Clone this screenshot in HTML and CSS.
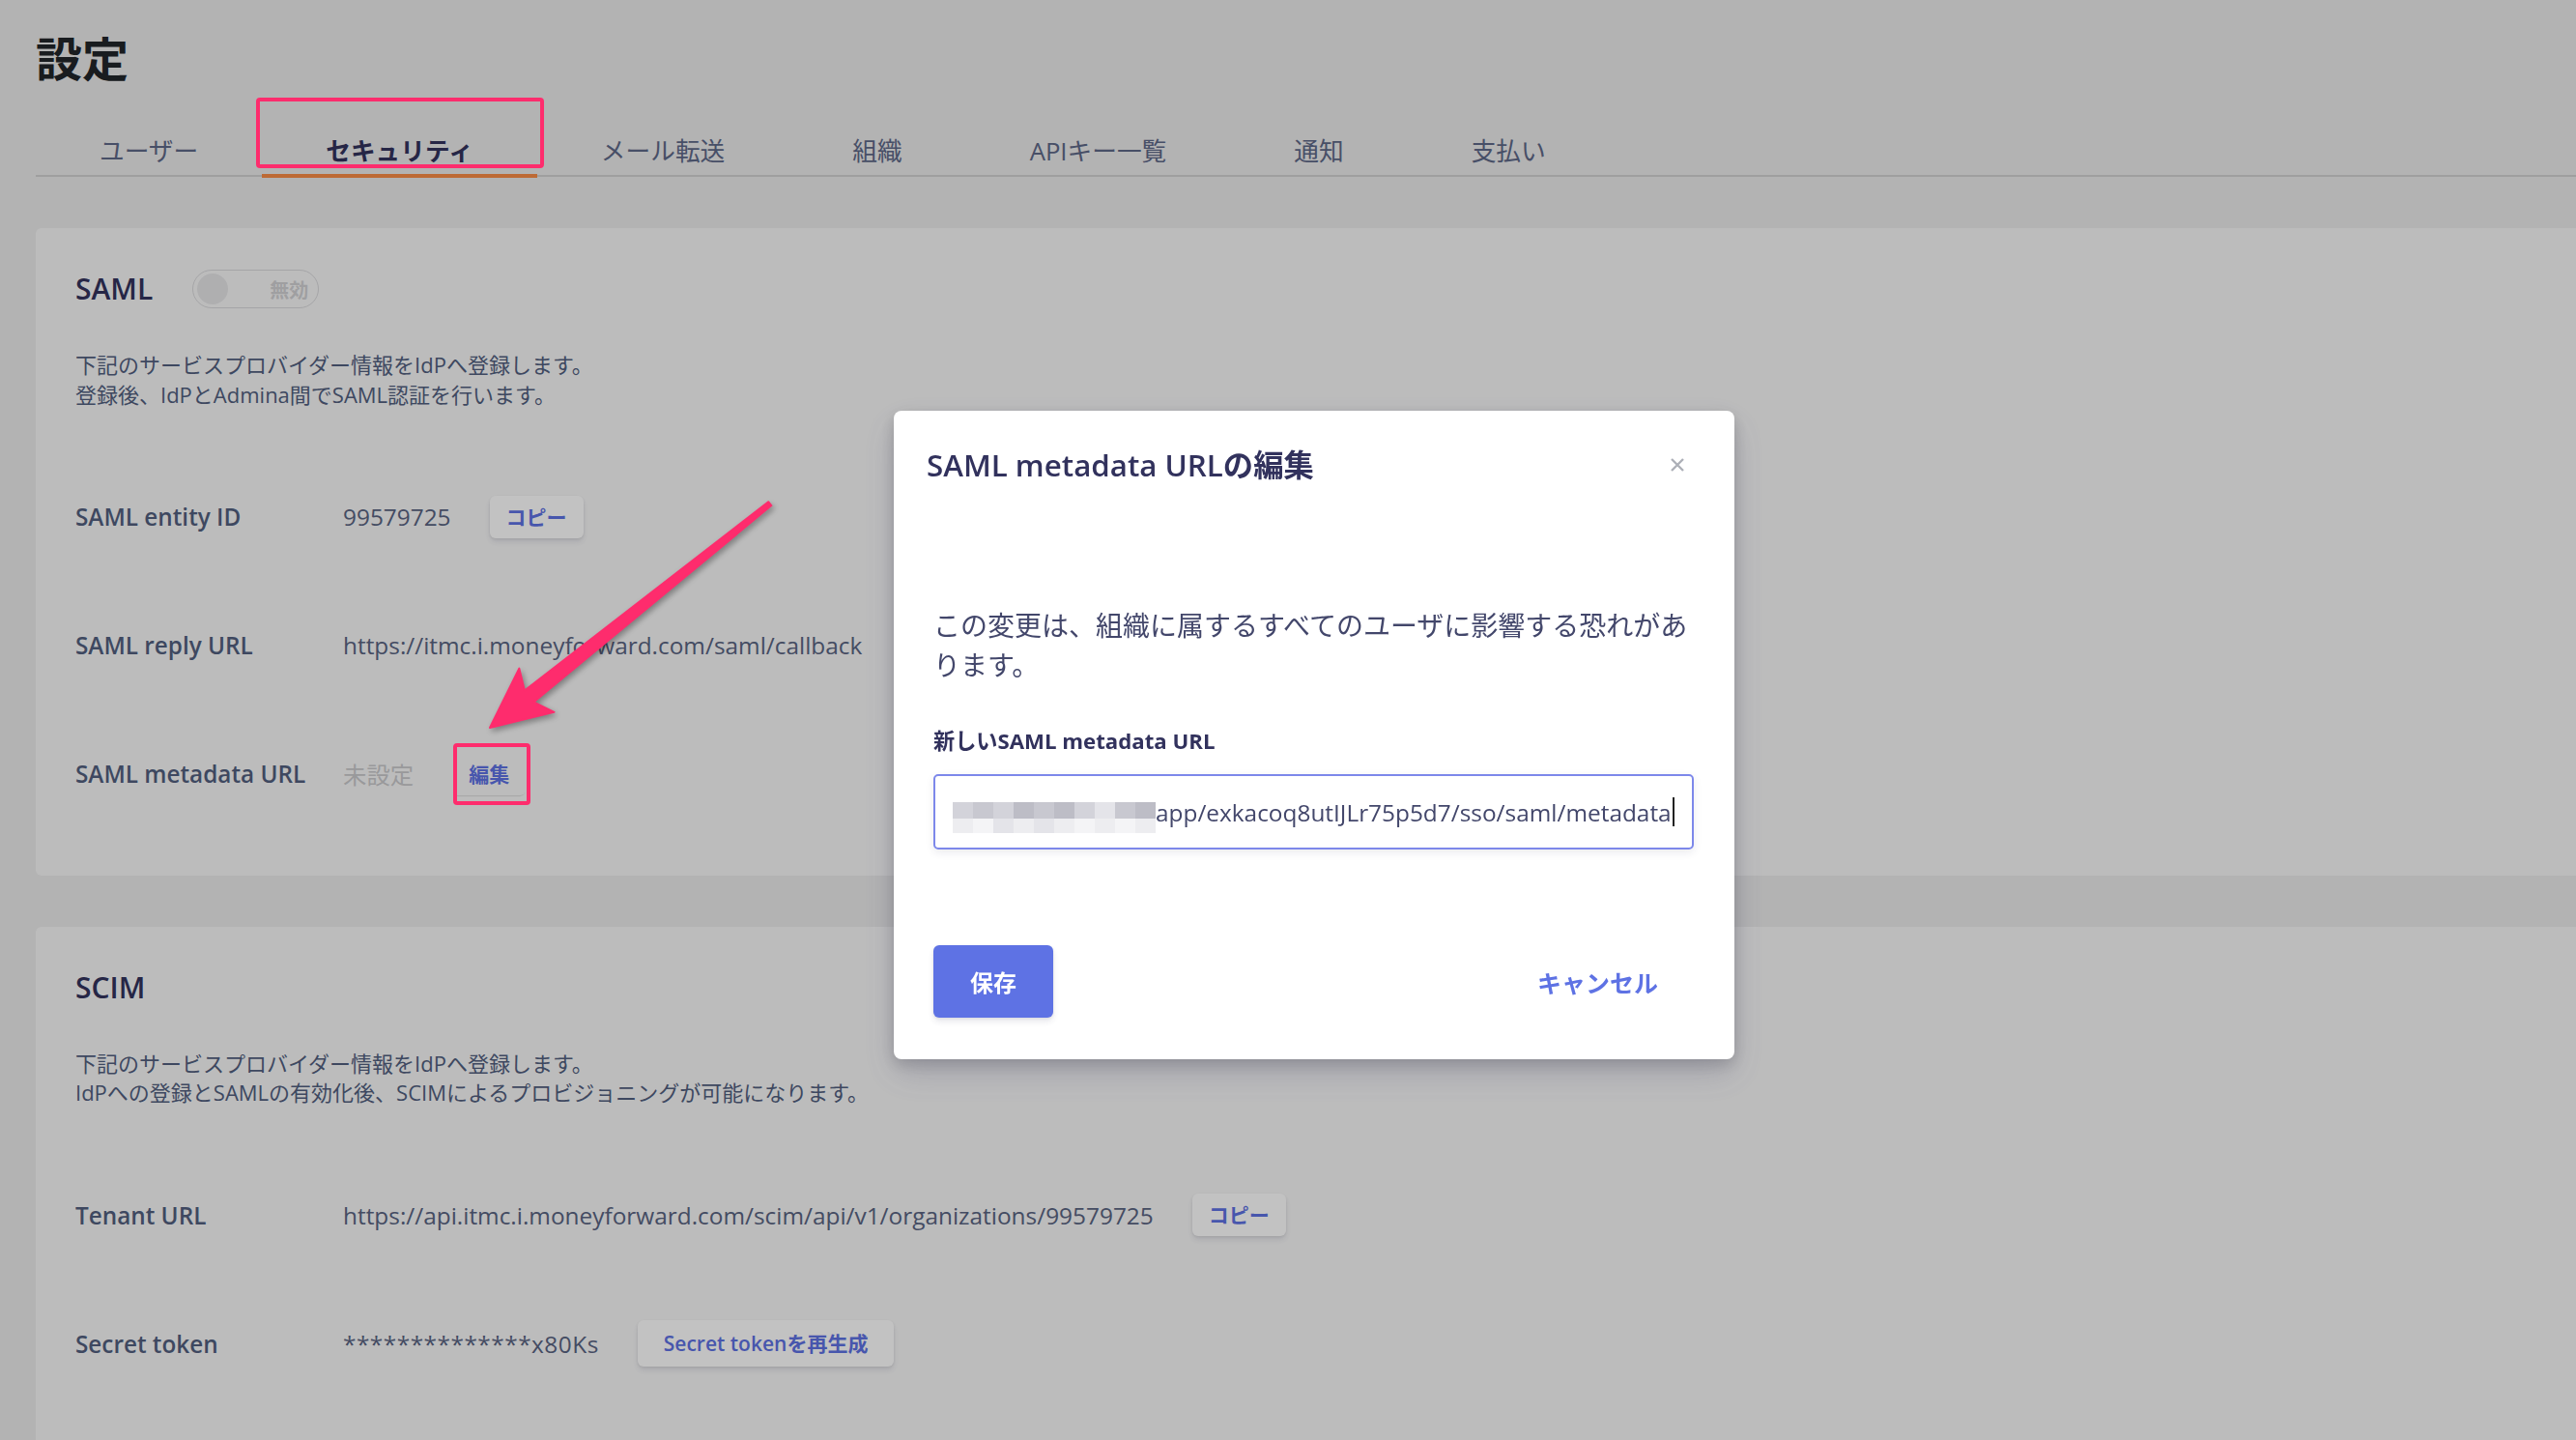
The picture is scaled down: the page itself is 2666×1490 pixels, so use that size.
FILE: index.html
```html
<!DOCTYPE html>
<html lang="ja">
<head>
    <meta charset="UTF-8">
    <meta name="viewport" content="width=device-width, initial-scale=1.0">
    <title>設定</title>
    <link rel="stylesheet" href="styles.css">
</head>
<body>
    <div class="page">
        <h1 class="title">設定</h1>
        <nav class="tabs">
            <a class="tab">ユーザー</a>
            <a class="tab active">セキュリティ</a>
            <a class="tab">メール転送</a>
            <a class="tab">組織</a>
            <a class="tab">APIキー一覧</a>
            <a class="tab">通知</a>
            <a class="tab">支払い</a>
        </nav>

        <section class="card">
            <div class="card-head">
                <h2>SAML</h2>
                <span class="toggle"><span class="knob"></span><span class="toggle-text">無効</span></span>
            </div>
            <p class="desc">下記のサービスプロバイダー情報をIdPへ登録します。<br>登録後、IdPとAdmina間でSAML認証を行います。</p>
            <div class="row">
                <span class="label">SAML entity ID</span>
                <span class="value">99579725</span>
                <button class="btn">コピー</button>
            </div>
            <div class="row">
                <span class="label">SAML reply URL</span>
                <span class="value">https://itmc.i.moneyforward.com/saml/callback</span>
            </div>
            <div class="row">
                <span class="label">SAML metadata URL</span>
                <span class="value unset">未設定</span>
                <button class="btn plain">編集</button>
            </div>
        </section>

        <section class="card">
            <div class="card-head">
                <h2>SCIM</h2>
            </div>
            <p class="desc">下記のサービスプロバイダー情報をIdPへ登録します。<br>IdPへの登録とSAMLの有効化後、SCIMによるプロビジョニングが可能になります。</p>
            <div class="row">
                <span class="label">Tenant URL</span>
                <span class="value">https://api.itmc.i.moneyforward.com/scim/api/v1/organizations/99579725</span>
                <button class="btn">コピー</button>
            </div>
            <div class="row">
                <span class="label">Secret token</span>
                <span class="value masked">**************x80Ks</span>
                <button class="btn wide">Secret tokenを再生成</button>
            </div>
        </section>
    </div>

    <div class="backdrop"></div>

    <div class="modal">
        <div class="modal-head">
            <h3>SAML metadata URLの編集</h3>
            <svg class="close" width="16" height="16" viewBox="0 0 16 16"><path d="M2 2L14 14M14 2L2 14"/></svg>
        </div>
        <div class="modal-body">
            <p class="notice">この変更は、組織に属するすべてのユーザに影響する恐れがあります。</p>
            <div class="field-label">新しいSAML metadata URL</div>
            <div class="input">
                <span class="mosaic">
                    <i class="m3"></i><i class="m2"></i><i class="m3"></i><i class="m1"></i><i class="m2"></i><i class="m1"></i><i class="m3"></i><i class="m4"></i><i class="m2"></i><i class="m1"></i>
                    <i class="m5"></i><i class="m6"></i><i class="m4"></i><i class="m5"></i><i class="m4"></i><i class="m5"></i><i class="m6"></i><i class="m5"></i><i class="m6"></i><i class="m5"></i>
                </span>
                <span class="input-text">app/exkacoq8utIJLr75p5d7/sso/saml/metadata</span><span class="caret"></span>
            </div>
        </div>
        <div class="modal-foot">
            <button class="btn-primary">保存</button>
            <button class="btn-link">キャンセル</button>
        </div>
    </div>

    <svg class="marks" width="2666" height="1490" viewBox="0 0 2666 1490">
        <rect x="267" y="103" width="294" height="69" rx="2"/>
        <rect x="471" y="771" width="76" height="60" rx="2"/>
        <polygon class="arrow" points="507,753 537.3,691.6 542.9,714.6 795.2,519.2 798.3,523.1 552.3,726.4 573.5,736.9"/>
    </svg>
</body>
</html>
```

FILE: styles.css
```css
* { box-sizing: border-box; }
html, body { margin: 0; height: 100%; overflow: hidden; }
body { background: #ebebeb; font-family: "Open Sans", "Noto Sans CJK JP", sans-serif; color: #525f7f; }

.page { padding: 29px 0 0 37px; }
.title { margin: 0; font-size: 48px; line-height: 64px; font-weight: 700; color: #212529; }

.tabs { display: flex; margin-top: 44px; border-bottom: 2px solid #d2d2d2; }
.tab { padding: 0 66px 4px; margin-bottom: -3px; border-bottom: 4px solid transparent; font-size: 25.7px; line-height: 39px; color: #5e6888; }
.tab.active { font-weight: 700; color: #32325d; border-bottom-color: #f98c46; }

.card { margin-top: 53px; padding: 43px 41px 83px; background: #f8f8f8; border-radius: 6px 0 0 6px; }
.card-head { display: flex; align-items: center; gap: 41px; height: 40px; }
.card-head h2 { margin: 0; font-size: 30px; line-height: 40px; font-weight: 600; color: #32325d; }

.toggle { display: flex; align-items: center; justify-content: space-between; width: 131px; height: 40px; padding: 0 10px 0 4px; border: 1px solid #d9d9dc; border-radius: 20px; }
.knob { width: 32px; height: 32px; border-radius: 50%; background: #e6e6e8; }
.toggle-text { font-size: 20px; font-weight: 600; color: #d2d2d4; }

.desc { margin: 43px 0 0; font-size: 22px; line-height: 30.8px; color: #525f7f; }

.row { display: flex; align-items: center; height: 44px; margin-top: 89px; }
.label { width: 277px; flex-shrink: 0; font-size: 24.3px; font-weight: 600; color: #525f7f; }
.value { margin-right: 40px; font-size: 24.4px; color: #5a6482; }
.value.unset { color: #c9c9cc; }
.value.masked { letter-spacing: .5px; }

.btn { padding: 8px 17px; border: 0; border-radius: 6px; background: #fff; font-family: inherit; font-size: 21px; line-height: 28px; font-weight: 700; color: #5e72e4; box-shadow: 0 4px 6px rgba(50, 50, 93, .11), 0 1px 3px rgba(0, 0, 0, .08); }
.btn.plain { background: transparent; box-shadow: 0 2px 1px -1px rgba(0, 0, 0, .12); }
.btn.wide { padding: 10px 27px; font-weight: 600; }

.backdrop { position: fixed; inset: 0; background: rgba(0, 0, 0, .24); }

.modal { position: fixed; left: 925px; top: 425px; width: 870px; background: #fff; border-radius: 8px; box-shadow: 0 15px 35px rgba(50, 50, 93, .2), 0 5px 15px rgba(0, 0, 0, .17); }
.modal-head { display: flex; justify-content: space-between; align-items: center; padding: 35px 51px 0 34px; }
.modal-head h3 { margin: 0; font-size: 31.3px; line-height: 42px; font-weight: 600; color: #32325d; }
.close { fill: none; stroke: #adb0b8; stroke-width: 2.4; }

.modal-body { padding: 125px 42px 0 41px; }
.notice { margin: 0; font-size: 28px; line-height: 41px; color: #43476b; }
.field-label { margin-top: 42px; font-size: 22.2px; line-height: 32px; font-weight: 700; color: #32325d; }

.input { display: flex; align-items: center; height: 78px; margin-top: 18px; padding: 0 18px; border: 2px solid #7d88ea; border-radius: 5px; box-shadow: 0 3px 9px rgba(50, 50, 93, .1); font-size: 24.4px; color: #43476b; }
.mosaic { display: grid; grid-template-columns: repeat(10, 21px); grid-template-rows: 17px 15px; margin-top: 12px; }
.mosaic i { display: block; }
.m1 { background: #bdbdc6; }
.m2 { background: #c8c8d0; }
.m3 { background: #d3d3da; }
.m4 { background: #e4e4e9; }
.m5 { background: #ededf0; }
.m6 { background: #f4f4f6; }
.caret { width: 2px; height: 30px; margin-left: 1px; background: #222; }

.modal-foot { display: flex; justify-content: space-between; align-items: center; padding: 99px 42px 43px 41px; }
.btn-primary { width: 124px; height: 75px; border: 0; border-radius: 6px; background: #5e72e4; font-family: inherit; font-size: 24px; font-weight: 700; color: #fff; box-shadow: 0 4px 6px rgba(50, 50, 93, .11), 0 1px 3px rgba(0, 0, 0, .08); }
.btn-link { padding: 0 37px 0 0; border: 0; background: none; font-family: inherit; font-size: 25px; font-weight: 700; color: #5e72e4; }

.marks { position: fixed; left: 0; top: 0; pointer-events: none; }
.marks rect { fill: none; stroke: #fe2c6d; stroke-width: 4; }
.marks .arrow { fill: #fe2c6d; stroke: #fe2c6d; stroke-width: 2; stroke-linejoin: round; filter: drop-shadow(2px 3px 3px rgba(0, 0, 0, .35)); }
```
